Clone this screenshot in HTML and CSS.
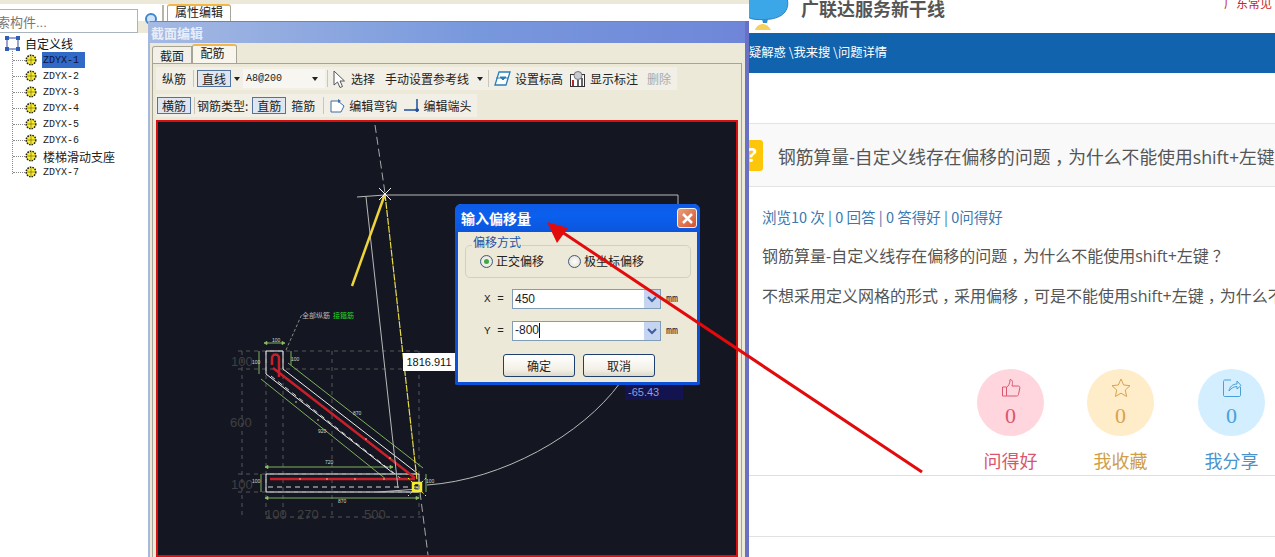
FILE: index.html
```html
<!DOCTYPE html>
<html lang="zh">
<head>
<meta charset="utf-8">
<title>截面编辑</title>
<link rel="stylesheet" href="styles.css">
</head>
<body>
<svg class="defs" width="0" height="0">
  <symbol id="gear" viewBox="0 0 12 12">
    <circle cx="6" cy="6" r="4.800" fill="#f7ec2e" stroke="#26260f" stroke-width="1.500" stroke-dasharray="1.600 1"/>
    <path d="M6 2.500v7M2.500 6h7" stroke="#4a4716" stroke-width="1" stroke-dasharray="1 1"/>
  </symbol>
</svg>
<div class="desktop">
  <section class="app">
    <div class="app-top"></div>
    <div class="app-bar">
      <div class="search"><span class="search-text">搜索构件...</span></div>
      <svg class="search-icon" width="14" height="14" viewBox="0 0 14 14"><circle cx="7" cy="6" r="5" fill="#cfe3f7" stroke="#3f86cf" stroke-width="2"/></svg>
      <i class="bar-sep"></i>
      <div class="prop-tab">属性编辑</div>
    </div>
    <ul class="tree">
      <li class="tree-root">
        <svg width="15" height="15" viewBox="0 0 15 15"><rect x="2" y="2" width="11" height="11" fill="none" stroke="#2b4f9e" stroke-width="1"/><path d="M0 0h4v4H0zM11 0h4v4h-4zM0 11h4v4H0zM11 11h4v4h-4z" fill="#2f5db8"/></svg>
        <span>自定义线</span>
      </li>
      <li class="tree-item"><svg class="node"><use href="#gear"/></svg><span class="sel">ZDYX-1</span></li>
      <li class="tree-item"><svg class="node"><use href="#gear"/></svg><span>ZDYX-2</span></li>
      <li class="tree-item"><svg class="node"><use href="#gear"/></svg><span>ZDYX-3</span></li>
      <li class="tree-item"><svg class="node"><use href="#gear"/></svg><span>ZDYX-4</span></li>
      <li class="tree-item"><svg class="node"><use href="#gear"/></svg><span>ZDYX-5</span></li>
      <li class="tree-item"><svg class="node"><use href="#gear"/></svg><span>ZDYX-6</span></li>
      <li class="tree-item"><svg class="node"><use href="#gear"/></svg><span class="cjk">楼梯滑动支座</span></li>
      <li class="tree-item"><svg class="node"><use href="#gear"/></svg><span>ZDYX-7</span></li>
    </ul>
  </section>

  <section class="web">
    <header class="web-head">
      <svg class="logo" width="46" height="31" viewBox="0 0 46 31">
        <path d="M0-2h39c3 11-3 19-16 21C12 20 4 20 0 17z" fill="#3ba7e8" stroke="#2b7fc0"/>
        <path d="M14 19h6l-1 4h-4z" fill="#2e8ccb"/>
        <path d="M7 30c1-4 5-6 8-6s6 2 8 6z" fill="#f7cf5b"/>
      </svg>
      <h1 class="brand">广联达服务新干线</h1>
      <span class="region">广东常见</span>
    </header>
    <nav class="crumbs">疑解惑 \我来搜 \问题详情</nav>
    <div class="q-title">
      <span class="q-mark">?</span>
      <h2>钢筋算量-自定义线存在偏移的问题<span class="pct">，</span>为什么不能使用shift+左键<span class="pct">？</span></h2>
    </div>
    <p class="q-stats">浏览10 次 | 0 回答 | 0 答得好 | 0问得好</p>
    <p class="q-body">钢筋算量-自定义线存在偏移的问题<span class="pct">，</span>为什么不能使用shift+左键<span class="pct">？</span></p>
    <p class="q-body second">不想采用定义网格的形式<span class="pct">，</span>采用偏移<span class="pct">，</span>可是不能使用shift+左键<span class="pct">，</span>为什么不能使用</p>
    <div class="actions">
      <div class="act good">
        <div class="circle">
          <svg width="20" height="20" viewBox="0 0 20 20" fill="none" stroke="currentColor"><path d="M1.5 9h4v9h-4zM5.500 9.500c2-1.500 3.500-4 3.500-8 2.500 0 3 3 2 6.500h6.500c1 0 1.500 1 1.300 2l-1.300 6.500c-.2 1-1 1.500-2 1.500H5.500"/></svg>
          <b>0</b>
        </div>
        <span>问得好</span>
      </div>
      <div class="act fav">
        <div class="circle">
          <svg width="20" height="20" viewBox="0 0 20 20" fill="none" stroke="currentColor"><path d="M10 1l2.700 6 6.300.7-4.700 4.300 1.300 6.500L10 15.200l-5.600 3.300L5.700 12 1 7.700 7.300 7z"/></svg>
          <b>0</b>
        </div>
        <span>我收藏</span>
      </div>
      <div class="act share">
        <div class="circle">
          <svg width="20" height="20" viewBox="0 0 20 20" fill="none" stroke="currentColor"><path d="M9 2H3c-1 0-1.500.5-1.500 1.500v13.500c0 1 .5 1.500 1.500 1.500h14c1 0 1.500-.5 1.500-1.500V9M7 13c.5-4 3.500-7 8-7V3l4 4.500-4 3.500V8.500c-3 0-5.500 1.500-8 4.500z"/></svg>
          <b>0</b>
        </div>
        <span>我分享</span>
      </div>
    </div>
    <div class="empty-row"></div>
  </section>

  <section class="win">
    <div class="win-title">截面编辑</div>
    <div class="win-tabs">
      <span class="tab">截面</span>
      <span class="tab on">配筋</span>
    </div>
    <div class="panel">
      <div class="tb tb-one">
        <span class="t t1">纵筋</span><i class="sep"></i>
        <span class="t btn">直线</span><i class="caret"></i>
        <span class="combo">A8@200<i class="caret"></i></span><i class="sep"></i>
        <svg class="ico" width="12" height="18" viewBox="0 0 12 18"><path d="M1 1v14l3.500-3 2.500 5.500 2.500-1L7 11h4.500z" fill="#fff" stroke="#555"/></svg>
        <span class="t">选择</span>
        <span class="t gap-l">手动设置参考线</span><i class="caret"></i><i class="sep"></i>
        <svg class="ico" width="17" height="15" viewBox="0 0 17 15"><path d="M5 1h11l-4 13H1z" fill="#fff" stroke="#2a7fb8" stroke-width="1.300"/><path d="M2 7h12M6 6l3 3 3-3z" stroke="#2a7fb8" fill="#2a7fb8"/></svg>
        <span class="t">设置标高</span>
        <svg class="ico gap-m" width="15" height="16" viewBox="0 0 15 16"><rect x=".5" y="3.500" width="14" height="12" fill="#fff" stroke="#333"/><circle cx="8" cy="4.500" r="4" fill="#c8ccd4" stroke="#777"/><path d="M3 9v6" stroke="#b52a2a" stroke-width="2"/><path d="M8 9v6M12 7v8" stroke="#333" stroke-width="1.500"/></svg>
        <span class="t">显示标注</span>
        <span class="t off">删除</span>
      </div>
      <div class="tb tb-two">
        <span class="t btn">横筋</span><i class="sep"></i>
        <span class="t">钢筋类型:</span>
        <span class="t btn">直筋</span>
        <span class="t">箍筋</span><i class="sep"></i>
        <svg class="ico" width="16" height="15" viewBox="0 0 16 15"><path d="M1 3h7l6 5-3 6H1z" fill="#fff" stroke="#3a6ea5"/><path d="M8 1l3 2-3 2z" fill="#3a6ea5"/></svg>
        <span class="t">编辑弯钩</span>
        <svg class="ico gap-m" width="16" height="15" viewBox="0 0 16 15"><path d="M0 12h15M13 1v13" stroke="#1f4f9e" stroke-width="1.500"/><circle cx="13" cy="12" r="1.800" fill="#1f4f9e"/></svg>
        <span class="t">编辑端头</span>
      </div>
      <div class="canvas">
        <svg class="cad" width="578" height="435" viewBox="158 122 578 435">
          <g fill="none" stroke="#565656" stroke-dasharray="4 4">
            <path d="M238 351h181M238 369h181M238 474h181M238 492h181M266 517h155M242 351v165M266 351v165M283 351v165M332 351v165M419 351v165"/>
          </g>
          <g class="dim-text" fill="#404040" font-size="13">
            <text x="231" y="366">100</text>
            <text x="230" y="427">600</text>
            <text x="231" y="489">100</text>
            <text x="265" y="519">100</text>
            <text x="297" y="519">270</text>
            <text x="364" y="519">500</text>
          </g>
          <g fill="none" stroke="#7fb15c">
            <path d="M266 343h17M259 351v23M291 351v14M261 379l126 101M288 363l135 105M265 467h128M265 498h154M261 474v18M426 474v18"/>
            <path d="M264 343l3-1.500v3zM285 343l-3-1.500v3zM265 498l3-1.500v3zM419 498l-3-1.500v3zM265 467l3-1.500v3zM393 467l-3-1.500v3z" fill="#a6d87f"/>
          </g>
          <g class="dim-text" fill="#cfd6c4" font-size="5">
            <text x="272" y="342">100</text><text x="252" y="364">100</text><text x="291" y="361">100</text>
            <text x="353" y="415">870</text><text x="318" y="433">920</text><text x="325" y="464">720</text><text x="338" y="503">870</text><text x="426" y="483">100</text><text x="252" y="483">100</text>
          </g>
          <path d="M286 350l16-36" stroke="#8a8a8a" stroke-dasharray="3 2" fill="none"/>
          <text x="302" y="318" fill="#b9b9b9" font-size="7">全部纵筋</text>
          <text x="333" y="318" fill="#27d327" font-size="7">接箍筋</text>
          <g fill="none" stroke="#f2f2f2" stroke-width="1">
            <path d="M266 351h17v18l134 104M266 351v23l127 99M266 474h153v18H266z"/>
          </g>
          <path d="M271 376l133 105M268 487h148" stroke="#d8d8d8" stroke-dasharray="5 4" fill="none"/>
          <g fill="none" stroke="#c8202a" stroke-width="2.500">
            <path d="M273 368l142 110M270 479h145"/>
            <path d="M272 365v-7a3.500 3.500 0 0 1 7 0v19"/>
          </g>
          <g fill="#f0d8a0"><circle cx="296" cy="402" r=".8"/><circle cx="318" cy="420" r=".8"/><circle cx="366" cy="439" r=".8"/><circle cx="390" cy="458" r=".8"/><circle cx="300" cy="479" r=".8"/><circle cx="327" cy="479" r=".8"/><circle cx="355" cy="479" r=".8"/><circle cx="384" cy="479" r=".8"/></g>
          <g fill="none" stroke="#b9b9b9">
            <path d="M357 197l28-2h293v10M366 197l32 291M378 492l40-3"/>
            <path d="M427 485c75-5 155-50 193-102"/>
          </g>
          <path d="M375 125l10 68M420 492l8 63" stroke="#a8a8a8" stroke-dasharray="8 4" fill="none"/>
          <path d="M385 194l-33 92" stroke="#efd43a" stroke-width="2.500" fill="none"/>
          <path d="M385 194l32 286" stroke="#e8dc4a" stroke-width="1.200" stroke-dasharray="7 1" fill="none"/>
          <path d="M379 188l12 12M391 188l-12 12" stroke="#f4f4f4" fill="none"/>
          <rect x="413" y="483" width="8" height="8" fill="none" stroke="#f2ee2a" stroke-width="2.500"/>
          <path d="M408 478l18 18M426 478l-18 18" stroke="#f2ee2a" stroke-dasharray="2 2" fill="none"/>
        </svg>
        <span class="len">1816.911</span>
        <span class="angle">-65.43</span>
      </div>
    </div>
  </section>

  <section class="dialog">
    <div class="dlg-title">
      <span>输入偏移量</span>
      <span class="close"><svg width="13" height="13" viewBox="0 0 13 13"><path d="M2 2l9 9M11 2l-9 9" stroke="#fff" stroke-width="2.500"/></svg></span>
    </div>
    <div class="dlg-body">
      <fieldset class="group">
        <legend>偏移方式</legend>
        <label class="radio"><i class="dot on"></i>正交偏移</label>
        <label class="radio"><i class="dot"></i>极坐标偏移</label>
      </fieldset>
      <div class="field">
        <span class="fl">X =</span>
        <div class="inp"><span>450</span><i class="drop"><svg width="10" height="7" viewBox="0 0 10 7"><path d="M1 1l4 4 4-4" fill="none" stroke="#3d5f9e" stroke-width="2"/></svg></i></div>
        <span class="mm">mm</span>
      </div>
      <div class="field">
        <span class="fl">Y =</span>
        <div class="inp"><span class="cursor">-800</span><i class="drop"><svg width="10" height="7" viewBox="0 0 10 7"><path d="M1 1l4 4 4-4" fill="none" stroke="#3d5f9e" stroke-width="2"/></svg></i></div>
        <span class="mm">mm</span>
      </div>
      <div class="dlg-btns">
        <span class="xp-btn">确定</span>
        <span class="xp-btn">取消</span>
      </div>
    </div>
  </section>

  <svg class="arrow" width="1275" height="557" viewBox="0 0 1275 557">
    <path d="M922 472L556 228" stroke="#e20b0b" stroke-width="3" fill="none"/>
    <path d="M547 222l21 6-11 15z" fill="#e20b0b"/>
  </svg>
</div>
</body>
</html>
```
FILE: styles.css
```css
* { box-sizing: border-box; }
html, body { margin: 0; padding: 0; background: #fff; }
body { font-family: "Liberation Sans", "Noto Sans CJK SC", sans-serif; }
.defs { position: absolute; }
.desktop { position: relative; width: 1275px; height: 557px; overflow: hidden; display: flex; }

/* left application */
.app { width: 749px; flex: none; background: #fff; }
.app-top { height: 4px; background: #ece9d8; }
.app-bar { height: 29px; display: flex; align-items: flex-start; background: linear-gradient(#fff 17px, #ece9d8 17px); position: relative; }
.search { width: 138px; height: 24px; margin-top: 5px; border: 1px solid #a9b4bd; border-left: 0; background: #fff; overflow: hidden; display: flex; align-items: center; }
.search-text { margin-left: -16px; font-size: 13px; color: #777; white-space: nowrap; }
.search-icon { margin: 9px 0 0 6px; }
.bar-sep { width: 2px; height: 20px; background: #b8b6a8; margin: 1px 0 0 4px; }
.prop-tab { width: 64px; height: 17px; margin-left: 3px; border: 1px solid #a7a697; border-top: 2px solid #f2b649; border-bottom: 0; border-radius: 3px 3px 0 0; background: #fff; font-size: 12px; line-height: 15px; text-align: center; color: #222; }
.tree { list-style: none; margin: 2px 0 0; padding: 0; width: 148px; position: relative; background: #fff; }
.tree::before { content: ""; position: absolute; left: 12px; top: 14px; height: 125px; border-left: 1px dotted #888; }
.tree-root { height: 17px; padding-left: 5px; display: flex; align-items: center; gap: 5px; font-size: 12px; color: #111; }
.tree-item { height: 16px; padding-left: 25px; display: flex; align-items: center; font: 10px/16px "Liberation Mono", monospace; color: #222; position: relative; }
.tree-item > span { padding-top: 1px; }
.tree-item::before { content: ""; position: absolute; left: 13px; top: 8px; width: 12px; border-top: 1px dotted #888; }
.node { width: 12px; height: 12px; margin-right: 6px; flex: none; }
.sel { background: #316ac5; color: #0b1440; margin-left: -1px; padding: 0 6px 0 1px; height: 16px; }
.cjk { font-family: "Noto Sans CJK SC", sans-serif; font-size: 12px; }

/* right web page */
.web { flex: 1; min-width: 0; overflow: hidden; color: #555; font-family: "Open Sans", "Noto Sans CJK SC", sans-serif; }
.web-head { height: 33px; position: relative; display: flex; align-items: flex-start; font-family: "Noto Sans CJK SC", sans-serif; }
.logo { margin-left: -1px; flex: none; }
.brand { margin: -4px 0 0 7px; font-size: 18px; line-height: 24px; font-weight: 700; color: #555; white-space: nowrap; }
.region { margin: -6px 0 0 279px; font-size: 12px; line-height: 18px; color: #c8262c; white-space: nowrap; }
.crumbs { height: 40px; background: #1263ad; color: #fff; font-family: "Noto Sans CJK SC", sans-serif; font-size: 12.300px; line-height: 39px; white-space: nowrap; }
.q-title { margin-top: 50px; height: 64px; background: #f9f9f9; border-top: 1px solid #e4e4e4; border-bottom: 1px solid #e4e4e4; display: flex; align-items: center; white-space: nowrap; }
.q-mark { width: 22px; height: 31px; margin-left: -8px; flex: none; border-radius: 3px; background: #fdc60a; color: #fff; font-weight: 700; font-size: 20px; line-height: 30px; text-align: center; }
.q-title h2 { margin: 3px 0 0 15px; font-size: 17.800px; font-weight: 400; color: #555; line-height: 24px; }
.pct { display: inline-block; width: 1em; text-align: center; font-feature-settings: "halt"; }
.q-stats { margin: 20px 0 0 13px; height: 20px; font-family: "Noto Sans CJK SC", sans-serif; font-size: 14.500px; line-height: 20px; color: #3a78ae; white-space: nowrap; }
.q-body { margin: 18px 0 0 13px; height: 22px; font-size: 16px; line-height: 22px; color: #555; white-space: nowrap; }
.q-body.second { margin-top: 18px; }
.actions { margin-top: 62px; height: 107px; border-bottom: 1px solid #dedede; display: flex; padding-left: 228px; gap: 43px; white-space: nowrap; }
.act { width: 67px; display: flex; flex-direction: column; align-items: center; }
.act.share { margin-left: 1px; }
.circle { width: 67px; height: 67px; border-radius: 50%; display: flex; flex-direction: column; align-items: center; padding-top: 9px; flex: none; }
.circle svg { flex: none; }
.circle b { font-weight: 400; font-size: 22px; line-height: 24px; margin-top: 6px; font-family: "Liberation Serif", "Noto Sans CJK SC", serif; }
.act > span { font-size: 18px; line-height: 26px; margin-top: 11px; font-family: "Noto Sans CJK SC", sans-serif; }
.good .circle { background: #ffd6de; color: #d9566e; }
.good > span { color: #d9566e; }
.fav .circle { background: #ffecc8; color: #d9a24f; }
.fav > span { color: #cfa048; }
.share .circle { background: #d2eeff; color: #4a9fd8; }
.share > span { color: #4a94cb; }
.empty-row { height: 61px; border-bottom: 1px solid #e2e2e2; }

/* section editor window */
.win { position: absolute; left: 148px; top: 21px; width: 601px; height: 536px; background: #ece9d8; border-right: 4px solid #6a70c4; border-left: 2px solid #a6b8de; font-family: "Noto Sans CJK SC", sans-serif; color: #222; }
.win-title { height: 22px; padding-left: 1px; background: linear-gradient(90deg, #a4b9e3, #7898dd 55%, #6f86d8); border-top: 1px solid #5f86cf; font-size: 13px; font-weight: 700; line-height: 21px; color: #e8eef9; }
.win-tabs { height: 20px; padding: 1px 0 0 2px; display: flex; align-items: flex-end; font-size: 12px; }
.tab { width: 40px; height: 17px; border: 1px solid #a5a497; border-bottom: 0; background: #f3f1e7; line-height: 17px; text-align: center; border-radius: 3px 0 0 0; }
.tab.on { width: 45px; height: 20px; margin-bottom: -1px; padding-right: 4px; background: #f7f5ec; border-top: 2px solid #f2b649; border-radius: 3px 3px 0 0; line-height: 14px; position: relative; }
.panel { position: relative; margin: 0 3px 0 2px; height: 494px; border: 1px solid #a5a497; border-bottom: 0; padding: 3px 3px 0 3px; }
.tb { display: flex; align-items: center; font-size: 12px; height: 23px; background: #f1efe6; }
.tb-one { width: 521px; padding-left: 6px; }
.tb-two { width: 321px; margin-top: 4px; padding-left: 1px; }
.t { line-height: 16px; white-space: nowrap; }
.btn { width: 34px; height: 17px; text-align: center; background: #dfe6f0; border: 1px solid #52729f; line-height: 15px; flex: none; }
.sep { width: 1px; height: 17px; background: #c9c7b7; margin: 0 3px 0 7px; flex: none; }
.tb-two .sep { margin: 0 2px 0 3px; }
.tb-two .t:nth-of-type(2) { margin-right: 4px; }
.tb-two .t:nth-of-type(4) { margin-left: 5px; margin-right: 5px; }
.tb-two .sep:last-of-type { margin-right: 0; }
.caret { width: 0; height: 0; margin-left: 3px; border: 3px solid transparent; border-top: 4px solid #222; border-bottom: 0; flex: none; }
.combo { width: 82px; height: 19px; margin-left: 3px; padding-left: 3px; display: flex; align-items: center; justify-content: space-between; padding-right: 7px; background: #f7f6f0; font: 10px "Liberation Mono", monospace; }
.combo .caret { margin-left: 0; }
.combo + .sep { margin-left: 2px; }
.gap-l + .caret { margin-left: 8px; }
.ico { flex: none; margin-right: 4px; margin-left: 2px; }
.tb-one .ico:first-of-type { margin-right: 6px; }
.tb-one .ico:nth-of-type(3) { margin-right: 5px; }
.tb-two .ico { margin-left: 6px; margin-right: 3px; }
.gap-l { margin-left: 10px; }
.tb-one .caret + .sep { margin-left: 5px; }
.tb .gap-m { margin-left: 7px; }
.off { color: #aaa; margin-left: 9px; }
.canvas { position: relative; margin: 3px 0 0 0; width: 582px; height: 437px; border: 2px solid #d80f0f; background: #141722; overflow: hidden; }
.cad { display: block; }
.dim-text { font-family: "Liberation Sans", sans-serif; }
.len { position: absolute; left: 245px; top: 231px; width: 52px; height: 18px; background: #fff; color: #111; font: 11px/18px "Liberation Sans", sans-serif; text-align: center; }
.angle { position: absolute; left: 467px; top: 262px; width: 58px; height: 16px; background: #13134f; color: #8f9fd8; font: 11px/16px "Liberation Sans", sans-serif; padding-left: 3px; }

/* dialog */
.dialog { position: absolute; left: 455px; top: 204px; width: 245px; height: 181px; background: #ece9d8; border: 3px solid #0b50d6; border-top: 0; border-radius: 6px 6px 2px 2px; font-family: "Noto Sans CJK SC", sans-serif; color: #222; }
.dlg-title { height: 28px; margin: 0 -3px; padding: 0 3px 0 6px; border-radius: 6px 6px 0 0; background: linear-gradient(#0e5ae6, #0a60ee 40%, #0c55dc); color: #fff; font-size: 14px; font-weight: 700; display: flex; align-items: center; justify-content: space-between; }
.close { width: 20px; height: 20px; border-radius: 3px; border: 1px solid #f4f2ee; background: linear-gradient(135deg, #e9a07e, #d6512e); display: flex; align-items: center; justify-content: center; }
.group { position: relative; margin: 6px 6px 0 7px; padding: 0 0 4px 14px; height: 40px; border: 1px solid #d2d0bf; border-radius: 5px; display: flex; gap: 24px; align-items: center; }
.group legend { position: relative; top: -3px; margin-left: -8px; padding: 0 1px; font-size: 12px; line-height: 14px; color: #1a52a8; }
.radio { display: flex; align-items: center; gap: 3px; font-size: 12px; line-height: 16px; white-space: nowrap; margin-top: -3px; }
.dot { width: 13px; height: 13px; border-radius: 50%; border: 1px solid #3a5a80; background: radial-gradient(#fff, #dcd9cc); display: block; position: relative; }
.dot.on::after { content: ""; position: absolute; left: 3px; top: 3px; width: 5px; height: 5px; border-radius: 50%; background: #3fa83f; }
.field { display: flex; align-items: center; height: 20px; margin-top: 12px; padding-left: 26px; }
.group + .field { margin-top: 11px; }
.fl { width: 28px; font: 11px "Liberation Mono", monospace; }
.inp { width: 149px; height: 20px; border: 1px solid #7f9db9; background: #fff; display: flex; justify-content: space-between; font: 12px/18px "Liberation Sans", sans-serif; padding-left: 2px; }
.cursor { border-right: 1px solid #111; height: 15px; margin-top: 1px; line-height: 15px; }
.drop { width: 16px; height: 18px; background: #c5d4f0; display: flex; align-items: center; justify-content: center; }
.mm { margin-left: 5px; font: 10px "Liberation Mono", monospace; }
.dlg-btns { display: flex; gap: 8px; margin: 13px 0 0 45px; }
.xp-btn { width: 72px; height: 23px; border: 1px solid #1f3f6e; border-radius: 3px; background: linear-gradient(#fff, #f2f0e6 70%, #dcd9c8); font-size: 12px; line-height: 21px; text-align: center; }

.arrow { position: absolute; left: 0; top: 0; pointer-events: none; }
```
